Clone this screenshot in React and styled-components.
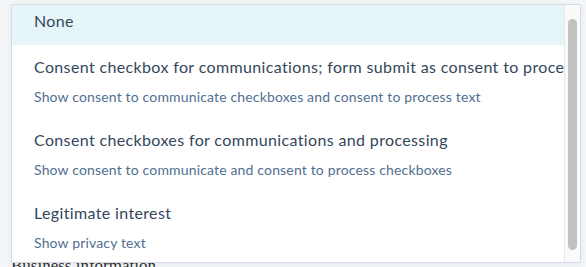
import React from 'react';
import styled, { createGlobalStyle } from 'styled-components';

const options = [
  { label: 'None', selected: true },
  {
    label: 'Consent checkbox for communications; form submit as consent to process',
    help: 'Show consent to communicate checkboxes and consent to process text',
  },
  {
    label: 'Consent checkboxes for communications and processing',
    help: 'Show consent to communicate and consent to process checkboxes',
  },
  { label: 'Legitimate interest', help: 'Show privacy text' },
];

const App = () => (
  <S.Page>
    <GlobalStyle />
    <S.Field>
      <S.SectionTitle>Business information</S.SectionTitle>
    </S.Field>
    <S.Dropdown>
      <S.List>
        {options.map((opt) => (
          <S.Option key={opt.label} selected={opt.selected}>
            <S.Label>{opt.label}</S.Label>
            {opt.help && <S.Help>{opt.help}</S.Help>}
          </S.Option>
        ))}
      </S.List>
      <S.Track>
        <S.Thumb />
      </S.Track>
    </S.Dropdown>
  </S.Page>
);

export default App;

const GlobalStyle = createGlobalStyle`
  body {
    margin: 0;
    background: #f4f6f8;
    overflow: hidden;
  }
`;

// Styled Components
const S = {};

S.Page = styled.div`
  position: relative;
  width: 586px;
  height: 267px;
  overflow: hidden;
`;

S.Field = styled.div`
  padding: 256px 0 0 11px;
`;

S.SectionTitle = styled.div`
  font-family: 'Liberation Serif', serif;
  font-size: 17px;
  line-height: 20px;
  color: #2d2d2d;
`;

S.Dropdown = styled.div`
  position: absolute;
  top: 4px;
  left: 11px;
  width: 570px;
  height: 259px;
  box-sizing: border-box;
  display: flex;
  background: #fff;
  border: 1px solid #d3dce6;
  border-radius: 2px;
  box-shadow: 0 1px 6px rgba(45, 62, 80, 0.08);
  overflow: hidden;
`;

S.List = styled.div`
  flex: 1;
  min-width: 0;
  font-family: Lato, 'Open Sans', sans-serif;
`;

S.Option = styled.div`
  padding: ${(p) => (p.selected ? '4px 22px 12px' : '10px 22px 11px')};
  background: ${(p) => (p.selected ? '#e5f5f8' : 'transparent')};
  white-space: nowrap;
  overflow: hidden;
`;

S.Label = styled.div`
  font-size: 16px;
  line-height: 24px;
  letter-spacing: 0.36px;
  color: #33475b;
`;

S.Help = styled.div`
  margin-top: 8px;
  font-size: 14px;
  line-height: 20px;
  letter-spacing: 0.16px;
  color: #516f90;
`;

S.Track = styled.div`
  width: 16px;
  flex-shrink: 0;
  padding: 14px 0 12px;
  box-sizing: border-box;
  background: #fafafa;
  border-left: 1px solid #e8e8e8;
  display: flex;
  justify-content: center;
`;

S.Thumb = styled.div`
  width: 9px;
  height: 100%;
  border-radius: 5px;
  background: #c1c1c1;
`;
